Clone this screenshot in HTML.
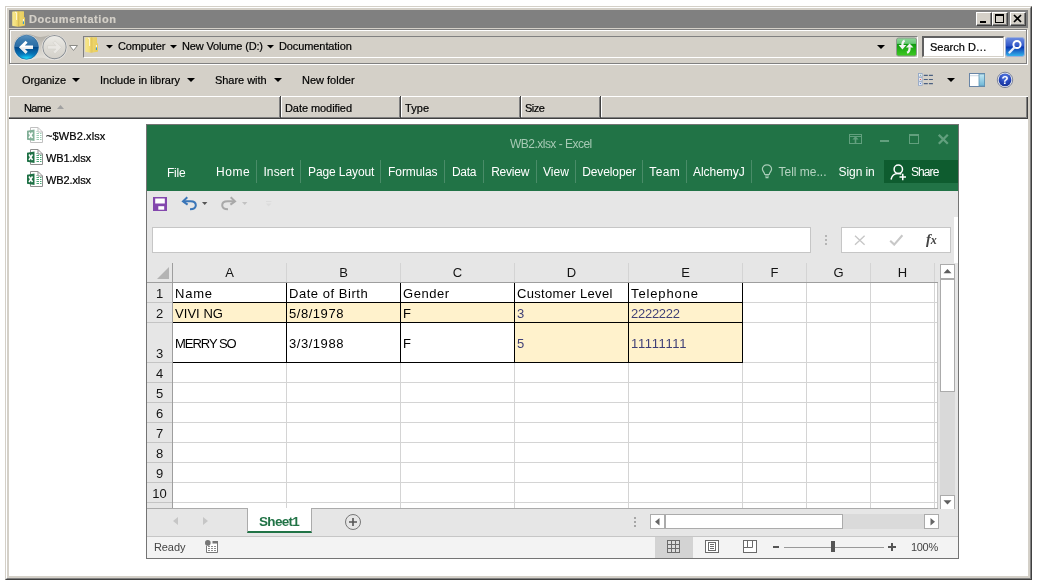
<!DOCTYPE html>
<html>
<head>
<meta charset="utf-8">
<title>Documentation</title>
<style>
html,body{margin:0;padding:0;background:#fff;}
body{width:1037px;height:586px;position:relative;overflow:hidden;font-family:"Liberation Sans",sans-serif;font-size:11px;color:#000;}
.a{position:absolute;}
.t{position:absolute;white-space:pre;line-height:14px;height:14px;-webkit-text-stroke:0.2px currentColor;}
/* explorer window */
#win{left:5px;top:6px;width:1027px;height:574px;background:#d4d0c8;box-sizing:border-box;
 border-top:1px solid #d4d0c8;border-left:1px solid #d4d0c8;border-right:1px solid #404040;border-bottom:1px solid #404040;}
#win2{left:6px;top:7px;width:1025px;height:572px;box-sizing:border-box;
 border-top:1px solid #fff;border-left:1px solid #fff;border-right:1px solid #808080;border-bottom:1px solid #808080;}
#title{left:9px;top:10px;width:1019px;height:18px;background:#808080;}
.cbtn{position:absolute;top:12px;width:16px;height:14px;background:#d4d0c8;box-sizing:border-box;
 border-top:1px solid #fff;border-left:1px solid #fff;border-right:1px solid #404040;border-bottom:1px solid #404040;}
.cbtn:after{content:"";position:absolute;left:0;top:0;right:0;bottom:0;border-right:1px solid #808080;border-bottom:1px solid #808080;}
/* etched panel */
.etch{position:absolute;box-sizing:border-box;border:1px solid #808080;box-shadow:1px 1px 0 #fff, inset 1px 1px 0 #fff;}
#list{left:9px;top:119px;width:1019px;height:457px;background:#fff;}
/* excel */
#xl{left:146px;top:124px;width:813px;height:435px;background:#e6e6e6;overflow:hidden;}
#xl .t{font-size:12px;line-height:16px;height:16px;-webkit-text-stroke:0;}
.tab{color:#fff;}
.sep{position:absolute;top:160px;width:1px;height:23px;background:#4a8c68;}
.cell{position:absolute;white-space:pre;font-size:13px;line-height:16px;height:16px;}
.hl{position:absolute;height:1px;background:#d4d4d4;}
.vl{position:absolute;width:1px;background:#d4d4d4;}
.bl{position:absolute;background:#000;}
.hdr{position:absolute;font-size:13px;line-height:16px;height:16px;text-align:center;color:#141414;}
</style>
</head>
<body>
<div id="root" style="position:absolute;left:0;top:0;width:1037px;height:586px;will-change:transform">
<!-- Explorer window frame -->
<div id="win" class="a"></div>
<div id="win2" class="a"></div>
<div id="title" class="a"></div>
<svg class="a" style="left:12px;top:11px" width="13" height="16" viewBox="0 0 13 16">
 <defs><linearGradient id="fg" x1="0" y1="0" x2="1" y2="0"><stop offset="0" stop-color="#f7e78e"/><stop offset="0.6" stop-color="#f3df7a"/><stop offset="1" stop-color="#e6c856"/></linearGradient><linearGradient id="fg2" x1="0" y1="0" x2="1" y2="0"><stop offset="0" stop-color="#dcbc48"/><stop offset="0.3" stop-color="#ecd46a"/><stop offset="1" stop-color="#e9cc5a"/></linearGradient></defs>
 <path d="M6 0.6 Q6 0.2 6.5 0.2 H11.5 Q12 0.2 12 0.8 V6.2 H12.6 Q13 6.2 13 6.8 V14 Q13 14.6 12.4 14.7 L6.5 15.8Z" fill="url(#fg2)"/>
 <path d="M0.2 1.2 Q0.2 0.6 0.8 0.5 L6 0.2 Q6.6 0.2 6.6 0.8 V15.3 Q6.6 15.9 6 15.8 L0.8 15 Q0.2 14.9 0.2 14.3Z" fill="url(#fg)"/>
 <path d="M3 1.2 L4.6 1.6 V9" fill="none" stroke="#fffdf0" stroke-width="0.9" opacity="0.95"/>
 <rect x="10.9" y="8" width="1" height="2.6" fill="#f4f8fb"/><rect x="10.9" y="10.4" width="1" height="2.6" fill="#2496dc"/>
</svg>
<span class="t" style="letter-spacing:0.58px;left:29px;top:12px;color:#d4d0c8;font-weight:bold;font-size:11px">Documentation</span>
<!-- caption buttons -->
<div class="cbtn" style="left:976px"></div>
<div class="cbtn" style="left:992px"></div>
<div class="cbtn" style="left:1010px"></div>
<div class="a" style="left:980px;top:21px;width:6px;height:2px;background:#000"></div>
<div class="a" style="left:995px;top:14px;width:9px;height:9px;box-sizing:border-box;border:1px solid #000;border-top-width:2px"></div>
<svg class="a" style="left:1013px;top:14px" width="10" height="9" viewBox="0 0 10 9"><path d="M1 1 L8 8 M8 1 L1 8" stroke="#000" stroke-width="1.7" fill="none"/></svg>

<!-- address bar panel -->
<div class="etch" style="left:9px;top:29px;width:1018px;height:35px"></div>
<!-- nav buttons -->
<svg class="a" style="left:11px;top:32px" width="70" height="30" viewBox="0 0 70 30">
 <defs>
  <linearGradient id="bk" x1="0" y1="0" x2="0" y2="1"><stop offset="0" stop-color="#5d93bf"/><stop offset="0.2" stop-color="#3c7cb0"/><stop offset="0.49" stop-color="#2a6ca4"/><stop offset="0.51" stop-color="#02498a"/><stop offset="0.8" stop-color="#0876b8"/><stop offset="1" stop-color="#0a8ccc"/></linearGradient>
  <radialGradient id="glow" cx="0.5" cy="1" r="0.55"><stop offset="0" stop-color="#25f0ff"/><stop offset="0.45" stop-color="#14b4e8" stop-opacity="0.8"/><stop offset="1" stop-color="#0a7fc0" stop-opacity="0"/></radialGradient>
  <linearGradient id="fw" x1="0" y1="0" x2="0" y2="1"><stop offset="0" stop-color="#ecebe7"/><stop offset="0.5" stop-color="#dedcd6"/><stop offset="1" stop-color="#d3d0c9"/></linearGradient>
  <linearGradient id="pill" x1="0" y1="0" x2="0" y2="1"><stop offset="0" stop-color="#a5a29b"/><stop offset="0.45" stop-color="#c9c6be"/><stop offset="1" stop-color="#ebe9e4"/></linearGradient>
 </defs>
 <path d="M15.5 2 C22 2 24 5 29.5 5 C35 5 37 2.6 43.5 2.6 A12.7 12.7 0 0 1 43.5 28 C37 28 35 25.8 29.5 25.8 C24 25.8 22 28.4 15.5 28.4 A13.2 13.2 0 0 1 15.5 2Z" fill="url(#pill)" opacity="0.85"/>
 <circle cx="15.5" cy="15.2" r="12.6" fill="#dfe6ea"/>
 <circle cx="15.5" cy="15.2" r="12" fill="url(#bk)"/>
 <path d="M3.5 15.2 A12 12 0 0 0 27.5 15.2Z" fill="url(#glow)"/>
 <circle cx="15.5" cy="15.2" r="12" fill="none" stroke="#1d5a8e" stroke-width="0.8" opacity="0.7"/>
 <circle cx="43.5" cy="15.2" r="11.7" fill="url(#fw)" stroke="#868c92" stroke-width="1.1"/>
 <circle cx="43.5" cy="15.2" r="12.6" fill="none" stroke="#eceae6" stroke-width="0.7"/>
 <path d="M8 15.3 L14.6 8.8 L16.6 10.8 L13.8 13.6 L22 13.6 L22 17 L13.8 17 L16.6 19.8 L14.6 21.8Z" fill="#fff"/>
 <path d="M8 15.3 L14.6 21.8 L16.6 19.8 L13.8 17 L22 17 L22 15.3Z" fill="#d8dde2" opacity="0.55"/>
 <path d="M50.5 15.3 L44 8.8 L42 10.8 L44.8 13.6 L36.5 13.6 L36.5 17 L44.8 17 L42 19.8 L44 21.8Z" fill="#e9e7e3" stroke="#d2d0ca" stroke-width="0.6"/>
 <path d="M58.5 13.5 L66.5 13.5 L62.5 18.5Z" fill="#fff" stroke="#8a8a86" stroke-width="1"/>
</svg>
<!-- address box -->
<div class="a" style="left:83px;top:36px;width:835px;height:22px;box-sizing:border-box;border-top:1px solid #808080;border-left:1px solid #808080;border-right:1px solid #fff;border-bottom:1px solid #fff;"></div>
<svg class="a" style="left:85px;top:37px" width="13" height="16" viewBox="0 0 13 16">
 <path d="M6 0.6 Q6 0.2 6.5 0.2 H11.5 Q12 0.2 12 0.8 V6.2 H12.6 Q13 6.2 13 6.8 V14 Q13 14.6 12.4 14.7 L6.5 15.8Z" fill="url(#fg2)"/>
 <path d="M0.2 1.2 Q0.2 0.6 0.8 0.5 L6 0.2 Q6.6 0.2 6.6 0.8 V15.3 Q6.6 15.9 6 15.8 L0.8 15 Q0.2 14.9 0.2 14.3Z" fill="url(#fg)"/>
 <path d="M3 1.2 L4.6 1.6 V9" fill="none" stroke="#fffdf0" stroke-width="0.9" opacity="0.95"/>
 <rect x="10.9" y="8" width="1" height="2.6" fill="#f4f8fb"/><rect x="10.9" y="10.4" width="1" height="2.6" fill="#2496dc"/>
</svg>
<svg class="a" style="left:106px;top:45px" width="7" height="4"><path d="M0 0 L7 0 L3.5 3.5Z" fill="#000"/></svg>
<span class="t" style="letter-spacing:-0.14px;left:118px;top:39px">Computer</span>
<svg class="a" style="left:170px;top:45px" width="7" height="4"><path d="M0 0 L7 0 L3.5 3.5Z" fill="#000"/></svg>
<span class="t" style="letter-spacing:-0.15px;left:182px;top:39px">New Volume (D:)</span>
<svg class="a" style="left:267px;top:45px" width="7" height="4"><path d="M0 0 L7 0 L3.5 3.5Z" fill="#000"/></svg>
<span class="t" style="letter-spacing:-0.1px;left:279px;top:39px">Documentation</span>
<svg class="a" style="left:877px;top:45px" width="8" height="4"><path d="M0 0 L8 0 L4 4Z" fill="#000"/></svg>
<!-- refresh button -->
<svg class="a" style="left:896px;top:37px" width="21" height="20" viewBox="0 0 21 20">
 <defs><linearGradient id="gr" x1="0" y1="0" x2="0" y2="1"><stop offset="0" stop-color="#8fd79a"/><stop offset="0.3" stop-color="#6cc978"/><stop offset="0.34" stop-color="#0f9a10"/><stop offset="1" stop-color="#3fcb22"/></linearGradient></defs>
 <rect x="0.5" y="1" width="20" height="18" rx="2" fill="url(#gr)" stroke="#8f9a8f"/>
 <path d="M8.6 3.4 C6.8 4.2 6.3 6 6.4 8.4" fill="none" stroke="#f4f4f4" stroke-width="2.2"/>
 <path d="M2.6 8.1 H10.3 L6.4 12.4Z" fill="#f4f4f4"/>
 <path d="M11 15.8 C13 15 13.7 13 13.6 10.2" fill="none" stroke="#f4f4f4" stroke-width="2.2"/>
 <path d="M9.9 10.6 H17.4 L13.6 6.6Z" fill="#f4f4f4"/>
</svg>
<!-- search box -->
<div class="a" style="left:922px;top:36px;width:82px;height:21px;box-sizing:border-box;background:#fff;border-top:2px solid #606060;border-left:2px solid #606060;border-right:1px solid #d4d0c8;border-bottom:1px solid #d4d0c8;box-shadow:1px 1px 0 #fff"></div>
<span class="t" style="left:930px;top:40px">Search D…</span>
<svg class="a" style="left:1005px;top:37px" width="20" height="20" viewBox="0 0 20 20">
 <defs><linearGradient id="sb" x1="0" y1="0" x2="0" y2="1"><stop offset="0" stop-color="#6f8ee0"/><stop offset="0.45" stop-color="#2f55c8"/><stop offset="0.5" stop-color="#0a34b0"/><stop offset="1" stop-color="#35b8ee"/></linearGradient></defs>
 <rect x="0.5" y="0.5" width="19" height="19" rx="2.5" fill="url(#sb)" stroke="#9fb0d8"/>
 <circle cx="12" cy="7.5" r="3.6" fill="none" stroke="#fff" stroke-width="2"/>
 <path d="M9.3 10.5 L4.5 15.5" stroke="#e8eefc" stroke-width="2.4" stroke-linecap="round"/>
</svg>

<!-- toolbar -->
<span class="t" style="letter-spacing:-0.09px;left:22px;top:73px">Organize</span>
<svg class="a" style="left:72px;top:78px" width="8" height="4"><path d="M0 0 L8 0 L4 4Z" fill="#000"/></svg>
<span class="t" style="left:100px;top:73px">Include in library</span>
<svg class="a" style="left:187px;top:78px" width="8" height="4"><path d="M0 0 L8 0 L4 4Z" fill="#000"/></svg>
<span class="t" style="letter-spacing:-0.04px;left:215px;top:73px">Share with</span>
<svg class="a" style="left:274px;top:78px" width="8" height="4"><path d="M0 0 L8 0 L4 4Z" fill="#000"/></svg>
<span class="t" style="left:302px;top:73px">New folder</span>
<!-- view icons -->
<svg class="a" style="left:918px;top:73px" width="16" height="13" viewBox="0 0 16 13">
 <g fill="#fff" stroke="#93a7c6" stroke-width="0.9"><rect x="0.5" y="0.5" width="3.6" height="3.4"/><rect x="0.5" y="4.7" width="3.6" height="3.4"/><rect x="0.5" y="8.9" width="3.6" height="3.4"/></g>
 <rect x="1.8" y="1.7" width="1" height="1" fill="#376"/><rect x="1.8" y="5.9" width="1" height="1" fill="#e21"/><rect x="1.8" y="10.1" width="1" height="1" fill="#25c"/>
 <g stroke="#4a5f80" stroke-width="1.2"><path d="M5.8 2.3 H9.8 M10.9 2.3 H14.9 M5.8 6.5 H9.8 M10.9 6.5 H14.9 M5.8 10.6 H9.8 M10.9 10.6 H14.9"/></g>
</svg>
<svg class="a" style="left:947px;top:78px" width="8" height="4"><path d="M0 0 L8 0 L4 4Z" fill="#000"/></svg>
<svg class="a" style="left:969px;top:73px" width="16" height="14" viewBox="0 0 16 14">
 <defs><linearGradient id="pn" x1="0" y1="0" x2="0" y2="1"><stop offset="0" stop-color="#c4e8f3"/><stop offset="1" stop-color="#6db6d6"/></linearGradient></defs>
 <rect x="0.5" y="0.5" width="15" height="13" fill="#fff" stroke="#6985a6"/>
 <rect x="1" y="2.3" width="9" height="0.9" fill="#c5d3e2"/>
 <rect x="10" y="1" width="5.5" height="12" fill="url(#pn)" stroke="#5f94b4" stroke-width="0.8"/>
</svg>
<svg class="a" style="left:996px;top:71px" width="18" height="18" viewBox="0 0 18 18">
 <defs><radialGradient id="hp" cx="0.5" cy="0.25" r="0.8"><stop offset="0" stop-color="#5a7ee6"/><stop offset="0.6" stop-color="#2444b8"/><stop offset="1" stop-color="#14308f"/></radialGradient></defs>
 <circle cx="9" cy="8.9" r="7.7" fill="#eef0f5" stroke="#707890" stroke-width="0.9"/>
 <circle cx="9" cy="8.9" r="6.4" fill="url(#hp)"/>
 <text x="9" y="13" font-family="Liberation Sans, sans-serif" font-weight="bold" font-size="11.5" fill="#fff" text-anchor="middle">?</text>
</svg>

<!-- column headers -->
<div class="a" style="left:9px;top:96px;width:1019px;height:1px;background:#fff"></div>
<div class="a" style="left:9px;top:97px;width:1px;height:21px;background:#fff"></div>
<div class="a" style="left:9px;top:117px;width:1019px;height:1px;background:#808080"></div>
<div class="a" style="left:9px;top:118px;width:1019px;height:1px;background:#404040"></div>
<div class="a" style="left:1027px;top:97px;width:1px;height:22px;background:#404040"></div>
<div class="a" style="left:1026px;top:97px;width:1px;height:21px;background:#808080"></div>
<div class="a" style="left:279px;top:97px;width:1px;height:21px;background:#808080"></div><div class="a" style="left:280px;top:96px;width:1px;height:22px;background:#404040"></div><div class="a" style="left:281px;top:97px;width:1px;height:20px;background:#fff"></div>
<div class="a" style="left:399px;top:97px;width:1px;height:21px;background:#808080"></div><div class="a" style="left:400px;top:96px;width:1px;height:22px;background:#404040"></div><div class="a" style="left:401px;top:97px;width:1px;height:20px;background:#fff"></div>
<div class="a" style="left:519px;top:97px;width:1px;height:21px;background:#808080"></div><div class="a" style="left:520px;top:96px;width:1px;height:22px;background:#404040"></div><div class="a" style="left:521px;top:97px;width:1px;height:20px;background:#fff"></div>
<div class="a" style="left:599px;top:97px;width:1px;height:21px;background:#808080"></div><div class="a" style="left:600px;top:96px;width:1px;height:22px;background:#404040"></div><div class="a" style="left:601px;top:97px;width:1px;height:20px;background:#fff"></div>
<span class="t" style="letter-spacing:-0.68px;left:24px;top:101px">Name</span>
<svg class="a" style="left:57px;top:105px" width="7" height="4"><path d="M3.5 0 L7 4 L0 4Z" fill="#a0a0a0"/></svg>
<span class="t" style="letter-spacing:-0.07px;left:285px;top:101px">Date modified</span>
<span class="t" style="letter-spacing:0.05px;left:405px;top:101px">Type</span>
<span class="t" style="letter-spacing:-0.47px;left:525px;top:101px">Size</span>

<!-- file list -->
<div id="list" class="a"></div>
<svg class="a" style="left:27px;top:127px;opacity:0.55" width="17" height="16" viewBox="0 0 17 16">
 <path d="M3.5 0.5 H11 L15.5 5 V15.5 H3.5Z" fill="#fff" stroke="#8e8e8e"/>
 <path d="M11 0.5 V5 H15.5" fill="none" stroke="#8e8e8e"/>
 <path d="M9.5 6.5 H12 M13 6.5 H14.5 M9.5 8.5 H12 M13 8.5 H14.5 M9.5 10.5 H12 M13 10.5 H14.5 M9.5 12.5 H12 M13 12.5 H14.5 M9.5 4.5 H10.5" stroke="#4aa877" stroke-width="1"/>
 <path d="M0 3.8 L7.5 2.5 V14 L0 12.8Z" fill="#1e7145"/>
 <path d="M2 5.5 L5.5 11 M5.5 5.5 L2 11" stroke="#fff" stroke-width="1.5"/>
</svg>
<svg class="a" style="left:27px;top:149px;opacity:1" width="17" height="16" viewBox="0 0 17 16">
 <path d="M3.5 0.5 H11 L15.5 5 V15.5 H3.5Z" fill="#fff" stroke="#8e8e8e"/>
 <path d="M11 0.5 V5 H15.5" fill="none" stroke="#8e8e8e"/>
 <path d="M9.5 6.5 H12 M13 6.5 H14.5 M9.5 8.5 H12 M13 8.5 H14.5 M9.5 10.5 H12 M13 10.5 H14.5 M9.5 12.5 H12 M13 12.5 H14.5 M9.5 4.5 H10.5" stroke="#4aa877" stroke-width="1"/>
 <path d="M0 3.8 L7.5 2.5 V14 L0 12.8Z" fill="#1e7145"/>
 <path d="M2 5.5 L5.5 11 M5.5 5.5 L2 11" stroke="#fff" stroke-width="1.5"/>
</svg>
<svg class="a" style="left:27px;top:171px;opacity:1" width="17" height="16" viewBox="0 0 17 16">
 <path d="M3.5 0.5 H11 L15.5 5 V15.5 H3.5Z" fill="#fff" stroke="#8e8e8e"/>
 <path d="M11 0.5 V5 H15.5" fill="none" stroke="#8e8e8e"/>
 <path d="M9.5 6.5 H12 M13 6.5 H14.5 M9.5 8.5 H12 M13 8.5 H14.5 M9.5 10.5 H12 M13 10.5 H14.5 M9.5 12.5 H12 M13 12.5 H14.5 M9.5 4.5 H10.5" stroke="#4aa877" stroke-width="1"/>
 <path d="M0 3.8 L7.5 2.5 V14 L0 12.8Z" fill="#1e7145"/>
 <path d="M2 5.5 L5.5 11 M5.5 5.5 L2 11" stroke="#fff" stroke-width="1.5"/>
</svg>
<span class="t" style="letter-spacing:0.11px;left:46px;top:129px">~$WB2.xlsx</span>
<span class="t" style="letter-spacing:-0.11px;left:46px;top:151px">WB1.xlsx</span>
<span class="t" style="letter-spacing:-0.11px;left:46px;top:173px">WB2.xlsx</span>

<!-- Excel window -->
<div id="xl" class="a">
<div class="a" style="left:-146px;top:-124px;width:1037px;height:586px">
<div class="a" style="left:146px;top:124px;width:813px;height:67px;background:#217346"></div>
<span class="t" style="letter-spacing:-0.52px;left:510px;top:136px;color:#a6c9b4">WB2.xlsx - Excel</span>
<span class="t tab" style="letter-spacing:-0.21px;left:167.0px;top:165px">File</span>
<span class="t tab" style="letter-spacing:0.59px;left:216.0px;top:164px">Home</span>
<span class="t tab" style="letter-spacing:0.12px;left:263.4px;top:164px">Insert</span>
<span class="t tab" style="letter-spacing:-0.1px;left:308.0px;top:164px">Page Layout</span>
<span class="t tab" style="letter-spacing:-0.06px;left:388.0px;top:164px">Formulas</span>
<span class="t tab" style="letter-spacing:-0.32px;left:452.0px;top:164px">Data</span>
<span class="t tab" style="letter-spacing:-0.23px;left:491.2px;top:164px">Review</span>
<span class="t tab" style="letter-spacing:0.03px;left:543.0px;top:164px">View</span>
<span class="t tab" style="letter-spacing:-0.11px;left:582.2px;top:164px">Developer</span>
<span class="t tab" style="letter-spacing:0.35px;left:649.3px;top:164px">Team</span>
<span class="t tab" style="letter-spacing:-0.05px;left:693.0px;top:164px">AlchemyJ</span>
<div class="sep" style="left:256px"></div>
<div class="sep" style="left:300px"></div>
<div class="sep" style="left:380px"></div>
<div class="sep" style="left:444px"></div>
<div class="sep" style="left:483px"></div>
<div class="sep" style="left:536px"></div>
<div class="sep" style="left:575px"></div>
<div class="sep" style="left:642px"></div>
<div class="sep" style="left:686px"></div>
<div class="sep" style="left:751px"></div>
<span class="t" style="left:778.5px;top:164px;color:#b4d3c0">Tell me...</span>
<span class="t tab" style="letter-spacing:-0.1px;left:838.6px;top:164px">Sign in</span>
<div class="a" style="left:884px;top:160px;width:74px;height:23px;background:#0e5c2f"></div>
<span class="t tab" style="letter-spacing:-0.93px;left:911px;top:164px">Share</span>
<div class="a" style="left:152px;top:227px;width:659px;height:26px;box-sizing:border-box;background:#fff;border:1px solid #c6c6c6"></div>
<div class="a" style="left:841px;top:227px;width:110px;height:26px;box-sizing:border-box;background:#fff;border:1px solid #c6c6c6"></div>
<div class="a" style="left:954px;top:217px;width:4px;height:46px;background:#fff"></div>
<div class="a" style="left:173px;top:283px;width:765px;height:225px;background:#fff"></div>
<div class="a" style="left:173px;top:303px;width:570px;height:20px;background:#fff2cc"></div>
<div class="a" style="left:515px;top:323px;width:228px;height:40px;background:#fff2cc"></div>
<div class="vl" style="left:286px;top:263px;height:245px"></div>
<div class="vl" style="left:400px;top:263px;height:245px"></div>
<div class="vl" style="left:514px;top:263px;height:245px"></div>
<div class="vl" style="left:628px;top:263px;height:245px"></div>
<div class="vl" style="left:742px;top:263px;height:245px"></div>
<div class="vl" style="left:806px;top:263px;height:245px"></div>
<div class="vl" style="left:870px;top:263px;height:245px"></div>
<div class="vl" style="left:934px;top:263px;height:245px"></div>
<div class="hl" style="left:147px;top:302px;width:791px"></div>
<div class="hl" style="left:147px;top:322px;width:791px"></div>
<div class="hl" style="left:147px;top:362px;width:791px"></div>
<div class="hl" style="left:147px;top:382px;width:791px"></div>
<div class="hl" style="left:147px;top:402px;width:791px"></div>
<div class="hl" style="left:147px;top:422px;width:791px"></div>
<div class="hl" style="left:147px;top:442px;width:791px"></div>
<div class="hl" style="left:147px;top:462px;width:791px"></div>
<div class="hl" style="left:147px;top:482px;width:791px"></div>
<div class="hl" style="left:147px;top:502px;width:791px"></div>
<div class="a" style="left:147px;top:282px;width:791px;height:1px;background:#9e9e9e"></div>
<div class="a" style="left:172px;top:263px;width:1px;height:245px;background:#9e9e9e"></div>
<div class="a" style="left:937px;top:283px;width:1px;height:225px;background:#c8c8c8"></div>
<div class="a" style="left:147px;top:283px;width:25px;height:225px;background:#e6e6e6"></div>
<div class="hl" style="left:147px;top:302px;width:25px;background:#c4c4c4"></div>
<div class="hl" style="left:147px;top:322px;width:25px;background:#c4c4c4"></div>
<div class="hl" style="left:147px;top:362px;width:25px;background:#c4c4c4"></div>
<div class="hl" style="left:147px;top:382px;width:25px;background:#c4c4c4"></div>
<div class="hl" style="left:147px;top:402px;width:25px;background:#c4c4c4"></div>
<div class="hl" style="left:147px;top:422px;width:25px;background:#c4c4c4"></div>
<div class="hl" style="left:147px;top:442px;width:25px;background:#c4c4c4"></div>
<div class="hl" style="left:147px;top:462px;width:25px;background:#c4c4c4"></div>
<div class="hl" style="left:147px;top:482px;width:25px;background:#c4c4c4"></div>
<div class="hl" style="left:147px;top:502px;width:25px;background:#c4c4c4"></div>
<div class="bl" style="left:286px;top:283px;width:1px;height:80px"></div>
<div class="bl" style="left:400px;top:283px;width:1px;height:80px"></div>
<div class="bl" style="left:514px;top:283px;width:1px;height:80px"></div>
<div class="bl" style="left:628px;top:283px;width:1px;height:80px"></div>
<div class="bl" style="left:742px;top:283px;width:1px;height:80px"></div>
<div class="bl" style="left:173px;top:302px;width:570px;height:1px"></div>
<div class="bl" style="left:173px;top:322px;width:570px;height:1px"></div>
<div class="bl" style="left:173px;top:362px;width:570px;height:1px"></div>
<svg class="a" style="left:157px;top:267px" width="12" height="12"><path d="M12 0 L12 12 L0 12Z" fill="#b4b4b4"/></svg>
<span class="hdr" style="left:173px;width:113px;top:265px">A</span>
<span class="hdr" style="left:287px;width:113px;top:265px">B</span>
<span class="hdr" style="left:401px;width:113px;top:265px">C</span>
<span class="hdr" style="left:515px;width:113px;top:265px">D</span>
<span class="hdr" style="left:629px;width:113px;top:265px">E</span>
<span class="hdr" style="left:743px;width:63px;top:265px">F</span>
<span class="hdr" style="left:807px;width:63px;top:265px">G</span>
<span class="hdr" style="left:871px;width:63px;top:265px">H</span>
<span class="hdr" style="left:147px;width:25px;top:286px">1</span>
<span class="hdr" style="left:147px;width:25px;top:306px">2</span>
<span class="hdr" style="left:147px;width:25px;top:346px">3</span>
<span class="hdr" style="left:147px;width:25px;top:366px">4</span>
<span class="hdr" style="left:147px;width:25px;top:386px">5</span>
<span class="hdr" style="left:147px;width:25px;top:406px">6</span>
<span class="hdr" style="left:147px;width:25px;top:426px">7</span>
<span class="hdr" style="left:147px;width:25px;top:446px">8</span>
<span class="hdr" style="left:147px;width:25px;top:466px">9</span>
<span class="hdr" style="left:147px;width:25px;top:486px">10</span>
<span class="cell" style="letter-spacing:0.8px;left:175px;top:286px;color:#000">Name</span>
<span class="cell" style="letter-spacing:0.54px;left:289px;top:286px;color:#000">Date of Birth</span>
<span class="cell" style="letter-spacing:0.55px;left:403px;top:286px;color:#000">Gender</span>
<span class="cell" style="letter-spacing:0.33px;left:517px;top:286px;color:#000">Customer Level</span>
<span class="cell" style="letter-spacing:0.88px;left:631px;top:286px;color:#000">Telephone</span>
<span class="cell" style="letter-spacing:0.05px;left:175px;top:306px;color:#000">VIVI NG</span>
<span class="cell" style="letter-spacing:0.54px;left:289px;top:306px;color:#000">5/8/1978</span>
<span class="cell" style="left:403px;top:306px;color:#000">F</span>
<span class="cell" style="left:517px;top:306px;color:#3f3f76">3</span>
<span class="cell" style="letter-spacing:-0.27px;left:631px;top:306px;color:#3f3f76">2222222</span>
<span class="cell" style="letter-spacing:-1.02px;left:175px;top:336px;color:#000">MERRY SO</span>
<span class="cell" style="letter-spacing:0.54px;left:289px;top:336px;color:#000">3/3/1988</span>
<span class="cell" style="left:403px;top:336px;color:#000">F</span>
<span class="cell" style="left:517px;top:336px;color:#3f3f76">5</span>
<span class="cell" style="letter-spacing:0.63px;left:631px;top:336px;color:#3f3f76">11111111</span>
<div class="a" style="left:940px;top:264px;width:15px;height:246px;background:#d9d9d9"></div>
<div class="a" style="left:940px;top:264px;width:15px;height:15px;box-sizing:border-box;background:#fff;border:1px solid #ababab"></div>
<svg class="a" style="left:943px;top:269px" width="9" height="5"><path d="M0.5 4.2 L4.5 0 L8.5 4.2Z" fill="#5e5e5e"/></svg>
<div class="a" style="left:940px;top:279px;width:15px;height:113px;box-sizing:border-box;background:#fff;border:1px solid #ababab"></div>
<div class="a" style="left:940px;top:495px;width:15px;height:15px;box-sizing:border-box;background:#fff;border:1px solid #ababab"></div>
<svg class="a" style="left:943px;top:500px" width="9" height="5"><path d="M0.5 0.3 L8.5 0.3 L4.5 4.5Z" fill="#5e5e5e"/></svg>
<div class="a" style="left:146px;top:508px;width:792px;height:1px;background:#ababab"></div>
<div class="a" style="left:147px;top:509px;width:811px;height:27px;background:#e6e6e6"></div>
<svg class="a" style="left:173px;top:517px" width="5" height="8"><path d="M5 0 L5 8 L0 4Z" fill="#c6c6c6"/></svg>
<svg class="a" style="left:203px;top:517px" width="5" height="8"><path d="M0 0 L0 8 L5 4Z" fill="#c6c6c6"/></svg>
<div class="a" style="left:247px;top:508px;width:65px;height:25px;background:#fff;box-sizing:border-box;border-left:1px solid #ababab;border-right:1px solid #ababab;border-bottom:2px solid #217346"></div>
<span class="t" style="letter-spacing:-0.68px;left:259px;top:514px;color:#217346;font-weight:bold;font-size:13.5px">Sheet1</span>
<svg class="a" style="left:344px;top:513px" width="18" height="18" viewBox="0 0 18 18"><circle cx="9" cy="9" r="7.5" fill="none" stroke="#777" stroke-width="1"/><path d="M5 9 H13 M9 5 V13" stroke="#555" stroke-width="1.6"/></svg>
<div class="a" style="left:634px;top:517px;width:2px;height:2px;background:#a6a6a6"></div><div class="a" style="left:634px;top:521px;width:2px;height:2px;background:#a6a6a6"></div><div class="a" style="left:634px;top:525px;width:2px;height:2px;background:#a6a6a6"></div>
<div class="a" style="left:650px;top:514px;width:289px;height:15px;background:#dadada"></div>
<div class="a" style="left:650px;top:514px;width:15px;height:15px;box-sizing:border-box;background:#fff;border:1px solid #ababab"></div>
<svg class="a" style="left:655px;top:518px" width="5" height="8"><path d="M4.5 0 L4.5 7.4 L0 3.7Z" fill="#666"/></svg>
<div class="a" style="left:665px;top:514px;width:178px;height:15px;box-sizing:border-box;background:#fff;border:1px solid #ababab"></div>
<div class="a" style="left:924px;top:514px;width:15px;height:15px;box-sizing:border-box;background:#fff;border:1px solid #ababab"></div>
<svg class="a" style="left:930px;top:518px" width="5" height="8"><path d="M0.5 0 L0.5 7.4 L5 3.7Z" fill="#666"/></svg>
<div class="a" style="left:147px;top:536px;width:811px;height:22px;background:#f3f3f3;border-top:1px solid #c6c6c6;box-sizing:border-box"></div>
<span class="t" style="letter-spacing:-0.1px;left:154px;top:539px;color:#444;font-size:11px">Ready</span>
<div class="a" style="left:655px;top:537px;width:38px;height:21px;background:#d3d3d3"></div>
<span class="t" style="letter-spacing:-0.31px;left:911px;top:539px;color:#444;font-size:11px">100%</span>
<div class="a" style="left:773px;top:546px;width:6px;height:2px;background:#555"></div>
<div class="a" style="left:784px;top:547px;width:100px;height:1px;background:#999"></div>
<div class="a" style="left:831px;top:541px;width:4px;height:11px;background:#555"></div>
<div class="a" style="left:888px;top:546px;width:8px;height:2px;background:#555"></div><div class="a" style="left:891px;top:543px;width:2px;height:8px;background:#555"></div>
<svg class="a" style="left:153px;top:197px" width="14" height="14" viewBox="0 0 14 14"><rect x="0" y="0" width="14" height="14" fill="#8347ad"/><rect x="2.2" y="1.5" width="9.6" height="5" fill="#fff"/><rect x="5.3" y="9.2" width="5.9" height="3.5" fill="#fff"/></svg>
<svg class="a" style="left:181px;top:196px" width="17" height="15" viewBox="0 0 17 15"><path d="M6.3 1.2 L2 5.3 L6.6 8.6" fill="none" stroke="#3a76b8" stroke-width="2"/><path d="M2.5 5.2 H9.5 C13 5.2 14.8 7 14.8 9.2 C14.8 11.6 12.8 13.2 9 13.2" fill="none" stroke="#3a76b8" stroke-width="2"/></svg>
<svg class="a" style="left:202px;top:202px" width="6" height="3"><path d="M0 0 H5.4 L2.7 3Z" fill="#555"/></svg>
<svg class="a" style="left:220px;top:196px" width="17" height="15" viewBox="0 0 17 15"><g transform="translate(17,0) scale(-1,1)"><path d="M6.3 1.2 L2 5.3 L6.6 8.6" fill="none" stroke="#a9a9a9" stroke-width="2"/><path d="M2.5 5.2 H9.5 C13 5.2 14.8 7 14.8 9.2 C14.8 11.6 12.8 13.2 9 13.2" fill="none" stroke="#a9a9a9" stroke-width="2"/></g></svg>
<svg class="a" style="left:242px;top:202px" width="6" height="3"><path d="M0 0 H5.4 L2.7 3Z" fill="#c2c2c2"/></svg>
<svg class="a" style="left:266px;top:201px" width="6" height="6"><path d="M0 0.5 H5.4" stroke="#dcdcdc" stroke-width="1"/><path d="M0 2.5 H5.4 L2.7 5.5Z" fill="#dcdcdc"/></svg>
<svg class="a" style="left:849px;top:134px" width="13" height="10" viewBox="0 0 13 10"><rect x="0.5" y="0.5" width="12" height="9" fill="none" stroke="#62a07e"/><path d="M0.5 2.5 H12.5" stroke="#62a07e"/><path d="M6.5 2.2 L9.6 5.6 H7.3 V9.5 H5.7 V5.6 H3.4Z" fill="#62a07e"/></svg>
<div class="a" style="left:880px;top:140px;width:9px;height:2px;background:#62a07e"></div>
<div class="a" style="left:909px;top:134px;width:10px;height:10px;box-sizing:border-box;border:1px solid #62a07e;border-top-width:2px"></div>
<svg class="a" style="left:938px;top:134px" width="11" height="11" viewBox="0 0 11 11"><path d="M0.8 0.8 L9.8 9.8 M9.8 0.8 L0.8 9.8" stroke="#62a07e" stroke-width="2.3"/></svg>
<svg class="a" style="left:761px;top:164px" width="12" height="15" viewBox="0 0 12 15"><path d="M6 0.8 C3.2 0.8 1.4 2.8 1.4 5 C1.4 7.2 3.4 8.2 3.8 10.5 H8.2 C8.6 8.2 10.6 7.2 10.6 5 C10.6 2.8 8.8 0.8 6 0.8Z" fill="none" stroke="#a9cdb8" stroke-width="1.2"/><path d="M4 12 H8 M4.5 13.6 H7.5" stroke="#a9cdb8" stroke-width="1.1"/></svg>
<svg class="a" style="left:890px;top:164px" width="18" height="17" viewBox="0 0 18 17"><circle cx="8.3" cy="5.2" r="4.2" fill="none" stroke="#fff" stroke-width="1.5"/><path d="M1 15.5 C1.8 11.5 4.5 9.6 8.3 9.6 C9.6 9.6 10.6 9.8 11.4 10.2" fill="none" stroke="#fff" stroke-width="1.5"/><path d="M9.5 13 H16 M12.75 9.8 V16.2" stroke="#fff" stroke-width="1.5"/></svg>
<div class="a" style="left:825px;top:235px;width:2px;height:2px;background:#b5b5b5"></div>
<div class="a" style="left:825px;top:239px;width:2px;height:2px;background:#b5b5b5"></div>
<div class="a" style="left:825px;top:243px;width:2px;height:2px;background:#b5b5b5"></div>
<svg class="a" style="left:854px;top:235px" width="12" height="11" viewBox="0 0 12 11"><path d="M1 0.7 L10.6 9.8 M10.6 0.7 L1 9.8" stroke="#c6c6c6" stroke-width="1.3"/></svg>
<svg class="a" style="left:889px;top:234px" width="15" height="12" viewBox="0 0 15 12"><path d="M1.2 6.8 L5.2 10.6 L13.4 1.2" fill="none" stroke="#c8c8c8" stroke-width="2.1"/></svg>
<span class="t" style="left:926px;top:231px;font-family:'Liberation Serif',serif;font-style:italic;font-weight:bold;font-size:15px;color:#444;letter-spacing:-0.2px"><span style="font-size:14.5px">f</span><span style="font-size:12px;letter-spacing:0">x</span></span>
<svg class="a" style="left:667px;top:540px" width="13" height="13" viewBox="0 0 13 13"><rect x="0" y="0" width="13" height="13" fill="#dcdcdc"/><path d="M0.5 0 V13 M4.5 0 V13 M8.5 0 V13 M12.5 0 V13 M0 0.5 H13 M0 4.5 H13 M0 8.5 H13 M0 12.5 H13" stroke="#6a6a6a" stroke-width="1"/></svg>
<svg class="a" style="left:705px;top:540px" width="14" height="13" viewBox="0 0 14 13"><rect x="0.5" y="0.5" width="13" height="12" fill="#fff" stroke="#6a6a6a"/><rect x="3.5" y="2.5" width="7" height="8" fill="none" stroke="#6a6a6a"/><path d="M5 4.5 H9 M5 6.5 H9 M5 8.5 H9" stroke="#6a6a6a"/></svg>
<svg class="a" style="left:743px;top:540px" width="14" height="13" viewBox="0 0 14 13"><rect x="0.5" y="0.5" width="13" height="12" fill="#fff" stroke="#6a6a6a"/><path d="M4.5 0.5 V7.5 M9.5 0.5 V7.5 M0.5 7.5 H9.5" stroke="#6a6a6a" fill="none"/></svg>
<svg class="a" style="left:205px;top:540px" width="13" height="13" viewBox="0 0 13 13"><rect x="1.5" y="4" width="11" height="8.5" fill="#fff"/><path d="M1.5 6 V12.5 H12.5 V1.5" fill="none" stroke="#777"/><rect x="7.5" y="1" width="5.5" height="2.5" fill="#777"/><path d="M3 6.5 H5 M6 6.5 H8 M9 6.5 H11 M3 8.5 H5 M6 8.5 H8 M9 8.5 H11 M3 10.5 H5 M6 10.5 H8 M9 10.5 H11" stroke="#8c8c8c"/><circle cx="2.8" cy="2.9" r="2.8" fill="#757575"/></svg>
<div class="a" style="left:146px;top:124px;width:1px;height:435px;background:#747474"></div>
<div class="a" style="left:958px;top:124px;width:1px;height:435px;background:#747474"></div>
<div class="a" style="left:146px;top:558px;width:813px;height:1px;background:#747474"></div>
<div class="a" style="left:146px;top:124px;width:813px;height:1px;background:#747474"></div>
</div>
</div>
</div>
</body>
</html>
